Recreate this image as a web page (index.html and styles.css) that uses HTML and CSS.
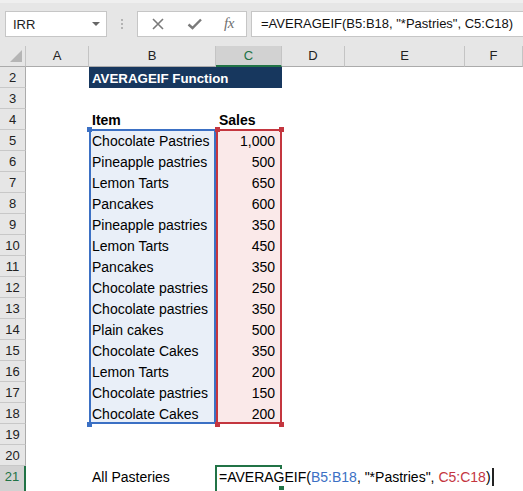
FILE: index.html
```html
<!DOCTYPE html>
<html>
<head>
<meta charset="utf-8">
<link rel="stylesheet" href="styles.css">
</head>
<body>
<div class="app">
  <div class="toolbar">
    <div class="namebox">
      <span class="nb-text">IRR</span>
      <svg class="nb-arrow" width="8" height="4" viewBox="0 0 8 4"><polygon points="0,0 8,0 4,4" fill="#666"/></svg>
    </div>
    <div class="grip"><i></i><i></i><i></i></div>
    <div class="btns">
      <svg class="ico" width="14" height="14" viewBox="0 0 14 14"><path d="M2 2 L12 12 M12 2 L2 12" stroke="#7a7a7a" stroke-width="1.6" fill="none"/></svg>
      <svg class="ico" width="16" height="14" viewBox="0 0 16 14"><path d="M1.5 7.5 L5.5 11 L14 2.5" stroke="#7a7a7a" stroke-width="2.4" fill="none"/></svg>
      <span class="fx">fx</span>
    </div>
    <div class="fbar">=AVERAGEIF(B5:B18, "*Pastries", C5:C18)</div>
  </div>

  <div class="sheet">
    <div class="corner"><span class="tri"></span></div>
    <div class="ch">A</div><div class="ch">B</div><div class="ch sel">C</div><div class="ch">D</div><div class="ch">E</div><div class="ch">F</div>

    <div class="rh">2</div><div class="c"></div><div class="c title title-main">AVERAGEIF Function</div><div class="c title"></div><div class="c"></div><div class="c"></div><div class="c"></div>
    <div class="rh">3</div><div class="c"></div><div class="c"></div><div class="c"></div><div class="c"></div><div class="c"></div><div class="c"></div>
    <div class="rh">4</div><div class="c"></div><div class="c bold">Item</div><div class="c bold">Sales</div><div class="c"></div><div class="c"></div><div class="c"></div>

    <div class="rh">5</div><div class="c"></div><div class="c rb rb-top">Chocolate Pastries</div><div class="c rr rr-top num">1,000</div><div class="c"></div><div class="c"></div><div class="c"></div>
    <div class="rh">6</div><div class="c"></div><div class="c rb">Pineapple pastries</div><div class="c rr num">500</div><div class="c"></div><div class="c"></div><div class="c"></div>
    <div class="rh">7</div><div class="c"></div><div class="c rb">Lemon Tarts</div><div class="c rr num">650</div><div class="c"></div><div class="c"></div><div class="c"></div>
    <div class="rh">8</div><div class="c"></div><div class="c rb">Pancakes</div><div class="c rr num">600</div><div class="c"></div><div class="c"></div><div class="c"></div>
    <div class="rh">9</div><div class="c"></div><div class="c rb">Pineapple pastries</div><div class="c rr num">350</div><div class="c"></div><div class="c"></div><div class="c"></div>
    <div class="rh">10</div><div class="c"></div><div class="c rb">Lemon Tarts</div><div class="c rr num">450</div><div class="c"></div><div class="c"></div><div class="c"></div>
    <div class="rh">11</div><div class="c"></div><div class="c rb">Pancakes</div><div class="c rr num">350</div><div class="c"></div><div class="c"></div><div class="c"></div>
    <div class="rh">12</div><div class="c"></div><div class="c rb">Chocolate pastries</div><div class="c rr num">250</div><div class="c"></div><div class="c"></div><div class="c"></div>
    <div class="rh">13</div><div class="c"></div><div class="c rb">Chocolate pastries</div><div class="c rr num">350</div><div class="c"></div><div class="c"></div><div class="c"></div>
    <div class="rh">14</div><div class="c"></div><div class="c rb">Plain cakes</div><div class="c rr num">500</div><div class="c"></div><div class="c"></div><div class="c"></div>
    <div class="rh">15</div><div class="c"></div><div class="c rb">Chocolate Cakes</div><div class="c rr num">350</div><div class="c"></div><div class="c"></div><div class="c"></div>
    <div class="rh">16</div><div class="c"></div><div class="c rb">Lemon Tarts</div><div class="c rr num">200</div><div class="c"></div><div class="c"></div><div class="c"></div>
    <div class="rh">17</div><div class="c"></div><div class="c rb">Chocolate pastries</div><div class="c rr num">150</div><div class="c"></div><div class="c"></div><div class="c"></div>
    <div class="rh">18</div><div class="c"></div><div class="c rb rb-bot">Chocolate Cakes</div><div class="c rr rr-bot num">200</div><div class="c"></div><div class="c"></div><div class="c"></div>

    <div class="rh">19</div><div class="c"></div><div class="c"></div><div class="c"></div><div class="c"></div><div class="c"></div><div class="c"></div>
    <div class="rh">20</div><div class="c"></div><div class="c"></div><div class="c"></div><div class="c"></div><div class="c"></div><div class="c"></div>
    <div class="rh rsel">21</div><div class="c"></div><div class="c">All Pasteries</div><div class="c edit">=AVERAGEIF(<span class="ref-b">B5:B18</span>, "*Pastries", <span class="ref-r">C5:C18</span>)<span class="caret"></span></div><div class="c"></div><div class="c"></div><div class="c"></div>
  </div>
</div>
</body>
</html>
```

FILE: styles.css
```css
* { box-sizing: border-box; }
html, body { margin: 0; padding: 0; background: #fff; }
body { width: 523px; height: 491px; overflow: hidden; font-family: "Liberation Sans", Arial, sans-serif; color: #000; }

.app { width: 523px; height: 491px; overflow: hidden; }

/* ---------- formula toolbar ---------- */
.toolbar {
  height: 46px;
  background: #e6e6e6;
  border-top: 3px solid #efefef;
  display: flex;
  align-items: flex-start;
  padding: 8px 0 0 5px;
}
.namebox {
  width: 102px; height: 26px;
  background: #fff;
  border: 1px solid #c6c6c6;
  display: flex; align-items: center; justify-content: space-between;
  padding: 0 6px 0 7px;
}
.nb-text { font-size: 13px; color: #222; padding-top: 1px; }
.nb-arrow { display: block; margin-top: -1px; }
.grip {
  width: 30px; height: 26px;
  display: flex; flex-direction: column; align-items: center; justify-content: center; gap: 2px;
}
.grip i { display: block; width: 2px; height: 2px; background: #b3b3b3; }
.btns {
  width: 110px; height: 26px;
  background: #fff;
  border: 1px solid #c6c6c6;
  display: flex; align-items: center;
  padding-left: 13px;
}
.btns .ico { display: block; }
.btns .ico:nth-child(2) { margin-left: 22px; }
.fx {
  margin-left: 21px;
  font-family: "Liberation Serif", "Times New Roman", serif;
  font-style: italic;
  font-size: 15px;
  color: #6f6f6f;
  letter-spacing: -0.5px;
  padding-bottom: 2px;
}
.fbar {
  flex: 1;
  height: 26px;
  margin-left: 4px;
  background: #fff;
  border: 1px solid #c6c6c6;
  border-right: none;
  font-size: 13px;
  line-height: 24px;
  padding-left: 9px;
  white-space: nowrap;
  color: #111;
}

/* ---------- sheet grid ---------- */
.sheet {
  display: grid;
  grid-template-columns: 26px 63px 127px 66px 63px 120px 58px;
  grid-auto-rows: 21px;
}
.corner {
  background: #e6e6e6;
  border-right: 1px solid #c4c4c4;
  border-bottom: 1px solid #ababab;
  position: relative;
}
.tri {
  position: absolute; left: 10px; top: 4px;
  width: 0; height: 0;
  border-left: 12px solid transparent;
  border-bottom: 12px solid #b5b5b5;
}
.ch {
  background: #e6e6e6;
  border-right: 1px solid #c4c4c4;
  border-bottom: 1px solid #ababab;
  text-align: center;
  font-size: 13px;
  line-height: 20px;
  color: #222;
}
.ch.sel { background: #d2d2d2; color: #217346; border-bottom: 2px solid #217346; }
.rh {
  background: #e6e6e6;
  border-right: 1px solid #ababab;
  border-bottom: 1px solid #c8c8c8;
  text-align: center;
  font-size: 13px;
  line-height: 21px;
  color: #222;
}
.rh.rsel {
  background: #d2d2d2; color: #217346;
  border-right: 2px solid #217346;
  border-bottom: none;
  margin-bottom: -6px;
}

.c {
  position: relative;
  font-size: 14px;
  line-height: 21px;
  padding: 1px 3px 0;
  white-space: nowrap;
}
.bold { font-weight: bold; }
.title {
  background: #17375e;
  color: #fff;
  font-weight: bold;
  font-size: 13.3px;
}
.title-main { z-index: 2; }
.num { text-align: right; padding-right: 7px; }

/* blue referenced range B5:B18 */
.rb { background: #e9eff8; box-shadow: inset 2px 0 #3b70c4, inset -2px 0 #3b70c4; }
.rb-top { box-shadow: inset 2px 0 #3b70c4, inset -2px 0 #3b70c4, 0 -1px 0 #3b70c4, inset 0 1px 0 #3b70c4; }
.rb-bot { box-shadow: inset 2px 0 #3b70c4, inset -2px 0 #3b70c4, inset 0 -2px 0 #3b70c4; }
/* red referenced range C5:C18 */
.rr { background: #fae9e9; box-shadow: inset 2px 0 #c4363f, inset -2px 0 #c4363f; }
.rr-top { box-shadow: inset 2px 0 #c4363f, inset -2px 0 #c4363f, 0 -1px 0 #c4363f, inset 0 1px 0 #c4363f; }
.rr-bot { box-shadow: inset 2px 0 #c4363f, inset -2px 0 #c4363f, inset 0 -2px 0 #c4363f; }

.rb-top::before, .rb-bot::before,
.rr-top::before, .rr-top::after,
.rr-bot::before, .rr-bot::after {
  content: "";
  position: absolute;
  width: 5px; height: 5px;
}
.rb-top::before { background: #3b70c4; left: -2px; top: -3px; }
.rb-bot::before { background: #3b70c4; left: -2px; bottom: -3px; }
.rr-top::before { background: #c4363f; left: -1px; top: -3px; }
.rr-top::after  { background: #c4363f; right: -2px; top: -3px; }
.rr-bot::before { background: #c4363f; left: -1px; bottom: -3px; }
.rr-bot::after  { background: #c4363f; right: -2px; bottom: -3px; }

/* in-cell editor C21 */
.edit {
  margin: -1px 0 -6px -1px;
  border-top: 2px solid #217346;
  border-left: 2px solid #217346;
  padding: 0 2px;
  line-height: 20px;
  z-index: 1;
}
.edit::before {
  content: "";
  position: absolute;
  right: 0; top: -2px;
  width: 2px; height: 4px;
  background: #217346;
}
.edit::after {
  content: "";
  position: absolute;
  right: -2px; top: 19px;
  width: 5px; height: 4px;
  background: #217346;
}
.ref-b { color: #3b70c4; }
.ref-r { color: #c4363f; }
.caret {
  display: inline-block;
  width: 2px; height: 18px;
  background: #222;
  vertical-align: -4px;
  margin-left: 1px;
}
```
